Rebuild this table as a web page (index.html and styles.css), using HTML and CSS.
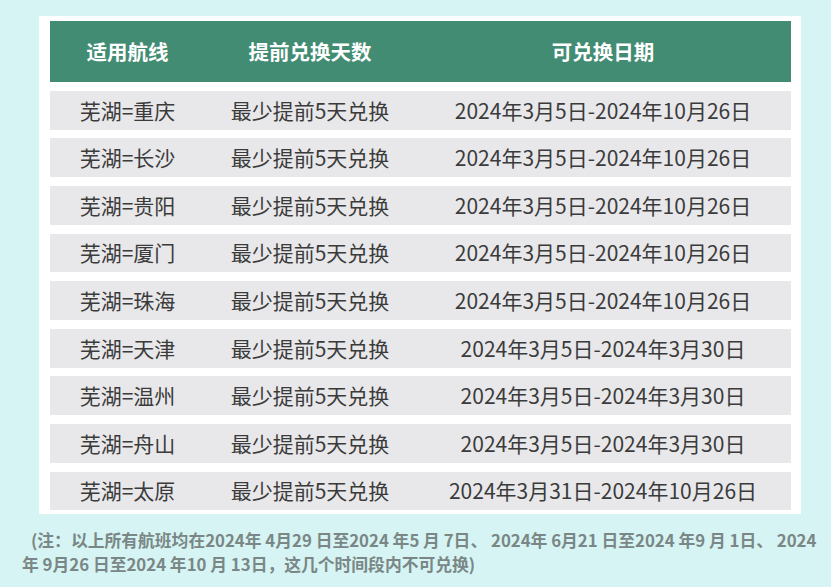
FILE: index.html
```html
<!DOCTYPE html>
<html lang="zh-CN">
<head>
<meta charset="utf-8">
<link rel="stylesheet" href="styles.css">
</head>
<body>
<div class="page">
  <div class="card">
    <div class="table">
      <div class="row head">
        <div class="c1">适用航线</div>
        <div class="c2">提前兑换天数</div>
        <div class="c3">可兑换日期</div>
      </div>
      <div class="row">
        <div class="c1">芜湖=重庆</div><div class="c2">最少提前5天兑换</div><div class="c3">2024年3月5日-2024年10月26日</div>
      </div>
      <div class="row">
        <div class="c1">芜湖=长沙</div><div class="c2">最少提前5天兑换</div><div class="c3">2024年3月5日-2024年10月26日</div>
      </div>
      <div class="row">
        <div class="c1">芜湖=贵阳</div><div class="c2">最少提前5天兑换</div><div class="c3">2024年3月5日-2024年10月26日</div>
      </div>
      <div class="row">
        <div class="c1">芜湖=厦门</div><div class="c2">最少提前5天兑换</div><div class="c3">2024年3月5日-2024年10月26日</div>
      </div>
      <div class="row">
        <div class="c1">芜湖=珠海</div><div class="c2">最少提前5天兑换</div><div class="c3">2024年3月5日-2024年10月26日</div>
      </div>
      <div class="row">
        <div class="c1">芜湖=天津</div><div class="c2">最少提前5天兑换</div><div class="c3">2024年3月5日-2024年3月30日</div>
      </div>
      <div class="row">
        <div class="c1">芜湖=温州</div><div class="c2">最少提前5天兑换</div><div class="c3">2024年3月5日-2024年3月30日</div>
      </div>
      <div class="row">
        <div class="c1">芜湖=舟山</div><div class="c2">最少提前5天兑换</div><div class="c3">2024年3月5日-2024年3月30日</div>
      </div>
      <div class="row">
        <div class="c1">芜湖=太原</div><div class="c2">最少提前5天兑换</div><div class="c3">2024年3月31日-2024年10月26日</div>
      </div>
    </div>
  </div>
  <p class="note"><span class="line first">(注：以上所有航班均在2024年 4月29 日至2024 年5 月 7日、 2024年 6月21 日至2024 年9 月 1日、 2024</span><span class="line">年 9月26 日至2024 年10 月 13日，这几个时间段内不可兑换)</span></p>
</div>
</body>
</html>
```
FILE: styles.css
```css
html, body {
  margin: 0;
  padding: 0;
  background: #d5f4f3;
}
.page {
  width: 831px;
  height: 587px;
  overflow: hidden;
  font-family: "Noto Sans CJK SC", "Noto Sans", sans-serif;
}
.card {
  margin: 16px 0 0 39px;
  width: 762px;
  box-sizing: border-box;
  background: #ffffff;
  padding: 5px 10px 4px 11px;
}
.table {
  display: flex;
  flex-direction: column;
  gap: 8.8px;
}
.row {
  display: grid;
  grid-template-columns: 155px 210px 1fr;
  align-items: center;
  height: 38.8px;
  background: #e8e8ea;
  color: #3b3b3b;
  font-size: 21px;
  text-align: center;
  line-height: 1;
}
.row.head {
  height: 61px;
  background: #428c73;
  color: #ffffff;
  font-weight: 700;
  font-size: 20.5px;
}
.note {
  margin: 14px 0 0 22px;
  color: #7a8786;
  font-weight: 700;
  font-size: 16.8px;
  line-height: 24px;
}
.line {
  display: block;
  white-space: nowrap;
}
.line.first {
  padding-left: 9px;
}
```
